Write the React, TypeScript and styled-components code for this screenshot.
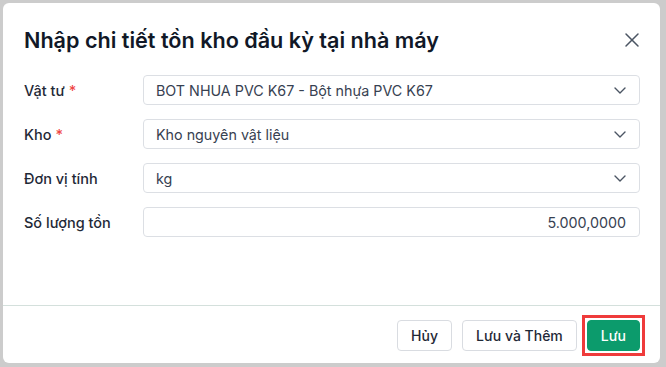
import React from 'react';
import styled, { createGlobalStyle } from 'styled-components';
import { X } from 'lucide-react';

const GlobalStyle = createGlobalStyle`
  html, body {
    margin: 0;
    padding: 0;
    background: #cccccc;
  }
  body {
    padding: 3px;
    font-family: Inter, "Noto Sans", sans-serif;
  }
`;

interface Field {
  label: string;
  required?: boolean;
  value: string;
  kind: 'select' | 'number';
}

const fields: Field[] = [
  { label: 'Vật tư', required: true, value: 'BOT NHUA PVC K67 - Bột nhựa PVC K67', kind: 'select' },
  { label: 'Kho', required: true, value: 'Kho nguyên vật liệu', kind: 'select' },
  { label: 'Đơn vị tính', value: 'kg', kind: 'select' },
  { label: 'Số lượng tồn', value: '5.000,0000', kind: 'number' },
];

function Chevron() {
  return (
    <svg width="12" height="7" viewBox="0 0 12 7" fill="none">
      <path d="M1 1l5 5 5-5" stroke="#4b5563" strokeWidth="1.4" strokeLinecap="round" strokeLinejoin="round" />
    </svg>
  );
}

function App() {
  return (
    <>
      <GlobalStyle />
      <Dialog>
        <Header>
          <Title>Nhập chi tiết tồn kho đầu kỳ tại nhà máy</Title>
          <CloseButton aria-label="Đóng">
            <X size={24} strokeWidth={1.5} />
          </CloseButton>
        </Header>
        <Body>
          {fields.map(function (f) {
            return (
              <Row key={f.label}>
                <Label>
                  {f.label}
                  {f.required && <Star>*</Star>}
                </Label>
                <Control $align={f.kind === 'number' ? 'right' : 'left'}>
                  <Value>{f.value}</Value>
                  {f.kind === 'select' && <Chevron />}
                </Control>
              </Row>
            );
          })}
        </Body>
        <Footer>
          <Button>Hủy</Button>
          <Button>Lưu và Thêm</Button>
          <Highlight>
            <Button $primary>Lưu</Button>
          </Highlight>
        </Footer>
      </Dialog>
    </>
  );
}

export default App;

const Dialog = styled.div({
  width: 657,
  height: 360,
  background: '#ffffff',
  borderRadius: 6,
  display: 'flex',
  flexDirection: 'column',
  boxSizing: 'border-box',
  overflow: 'hidden',
});

const Header = styled.div({
  display: 'flex',
  alignItems: 'center',
  justifyContent: 'space-between',
  padding: '23px 16px 0 21px',
  height: 28,
  boxSizing: 'content-box',
});

const Title = styled.h1({
  margin: 0,
  fontSize: 21.6,
  lineHeight: '28px',
  fontWeight: 600,
  color: '#111827',
});

const CloseButton = styled.button({
  border: 'none',
  background: 'transparent',
  padding: 0,
  width: 24,
  height: 24,
  display: 'flex',
  alignItems: 'center',
  justifyContent: 'center',
  color: '#4b5563',
  cursor: 'pointer',
});

const Body = styled.div({
  flex: 1,
  padding: '21px 20px 0 21px',
  display: 'flex',
  flexDirection: 'column',
  gap: 14,
});

const Row = styled.div({
  display: 'grid',
  gridTemplateColumns: '119px 1fr',
  alignItems: 'center',
});

const Label = styled.label({
  fontSize: 14.5,
  fontWeight: 500,
  color: '#1f2937',
  display: 'flex',
  alignItems: 'center',
});

const Star = styled.span({
  color: '#ef4444',
  marginLeft: 4,
});

const Control = styled.div<{ $align: 'left' | 'right' }>((p) => ({
  height: 30,
  boxSizing: 'border-box',
  border: '1px solid #dcdfe4',
  borderRadius: 4,
  display: 'flex',
  alignItems: 'center',
  justifyContent: p.$align === 'right' ? 'flex-end' : 'space-between',
  padding: '0 13px 0 12px',
  fontSize: 14.3,
  color: '#374151',
}));

const Value = styled.span({
  whiteSpace: 'nowrap',
});

const Footer = styled.div({
  borderTop: '1px solid #d4e0dc',
  padding: '14px 20px 12px',
  display: 'flex',
  justifyContent: 'flex-end',
  alignItems: 'center',
  gap: 10,
});

const Highlight = styled.span({
  display: 'flex',
  border: '3px solid #ef3b3b',
  padding: 2,
  margin: -5,
  marginLeft: -5,
  marginRight: -5,
});

const Button = styled.button<{ $primary?: boolean }>((p) => ({
  height: 31,
  padding: '0 13px',
  borderRadius: 4,
  fontFamily: 'Inter, "Noto Sans", sans-serif',
  fontSize: 14,
  fontWeight: 500,
  cursor: 'pointer',
  border: p.$primary ? '1px solid #0c9b6c' : '1px solid #d9dce1',
  background: p.$primary ? '#0c9b6c' : '#ffffff',
  color: p.$primary ? '#ffffff' : '#1f2937',
}));
